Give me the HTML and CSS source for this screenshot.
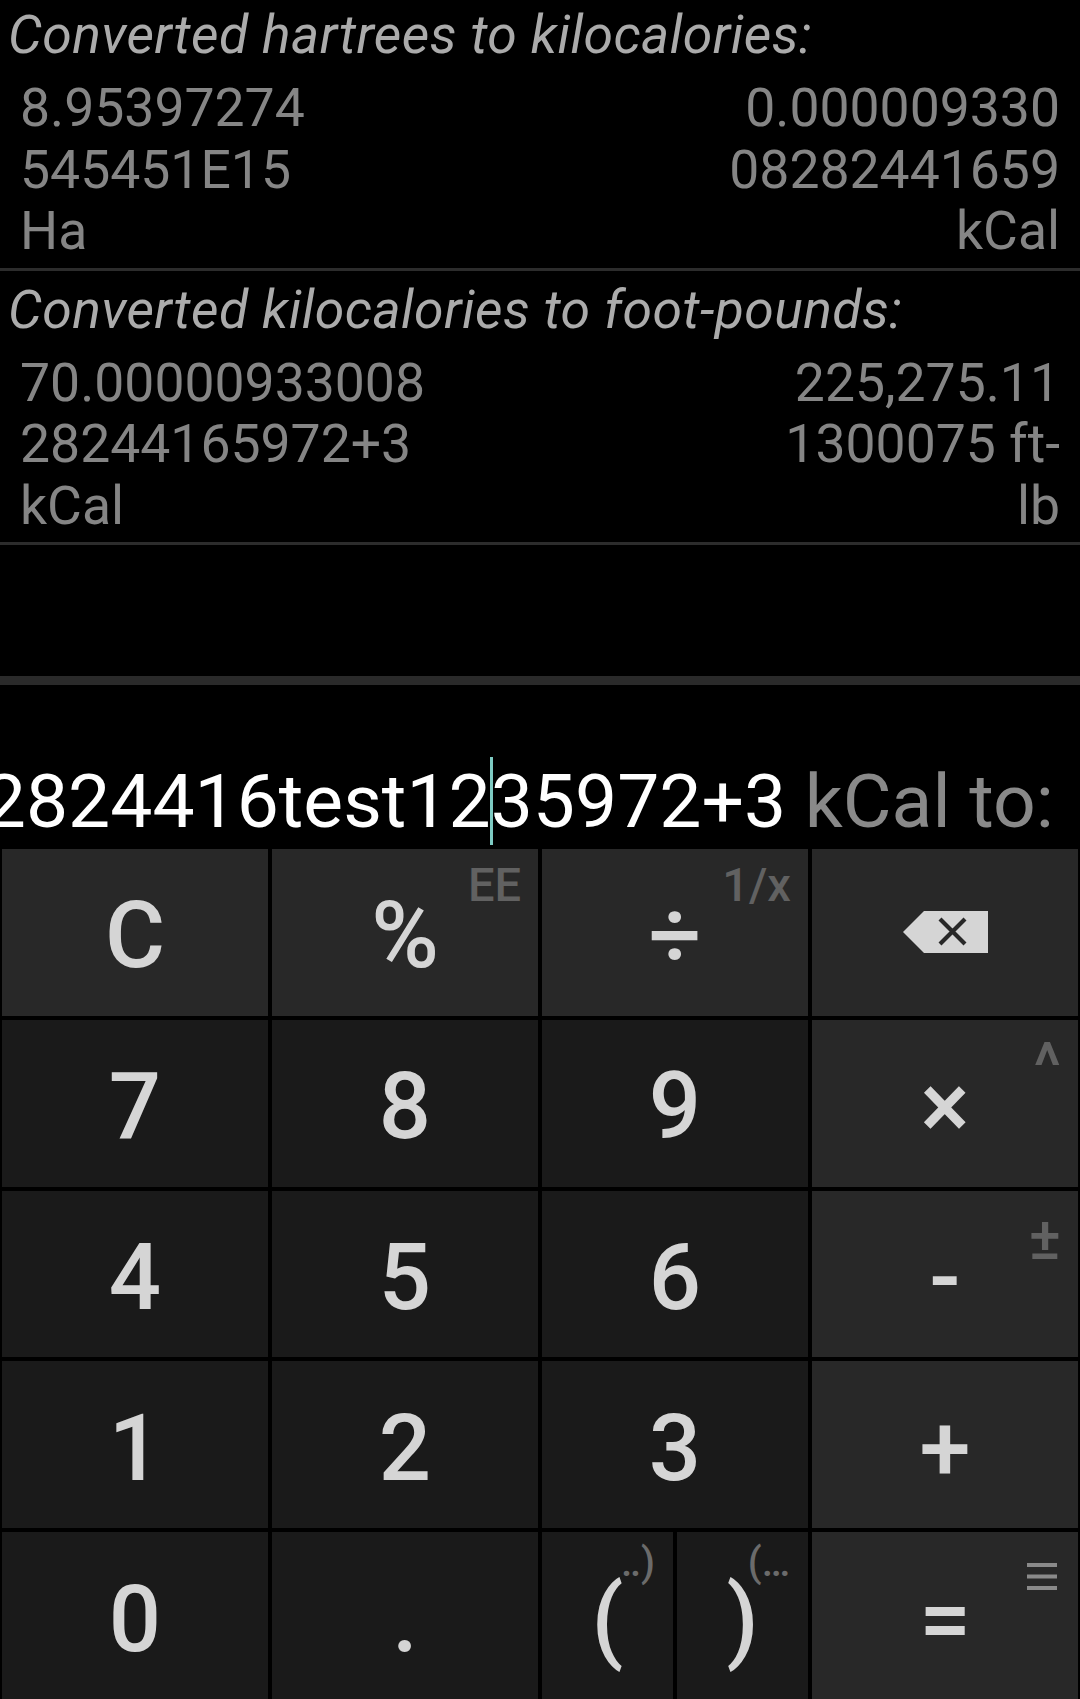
FILE: index.html
```html
<!DOCTYPE html>
<html lang="en">
<head>
<meta charset="utf-8">
<title>Unit calculator</title>
<link rel="stylesheet" href="styles.css">
</head>
<body>
<div class="app">
  <section class="results">
    <div class="result">
      <div class="result-title">Converted hartrees to kilocalories:</div>
      <div class="result-values">
        <div class="value from"><div>8.95397274</div><div>545451E15</div><div>Ha</div></div>
        <div class="value to"><div>0.000009330</div><div>08282441659</div><div>kCal</div></div>
      </div>
    </div>
    <div class="result">
      <div class="result-title">Converted kilocalories to foot-pounds:</div>
      <div class="result-values">
        <div class="value from"><div>70.00000933008</div><div>28244165972+3</div><div>kCal</div></div>
        <div class="value to"><div>225,275.11</div><div>1300075 ft-</div><div>lb</div></div>
      </div>
    </div>
  </section>
  <div class="handle"></div>
  <div class="display">
    <div class="input-line"><span class="input-text"><span class="input">2824416test12<span class="caret"></span>35972+3</span> <span class="hint">kCal to:</span></span></div>
  </div>
  <div class="keypad">
    <div class="key fn">C</div>
    <div class="key fn">%<span class="alt">EE</span></div>
    <div class="key fn">÷<span class="alt">1/x</span></div>
    <div class="key fn">
      <svg class="backspace" width="85" height="42" viewBox="0 0 85 42" aria-label="backspace">
        <polygon points="0,21 21,0 85,0 85,42 21,42" fill="#d5d5d5"/>
        <path d="M37 8 L62 33 M62 8 L37 33" stroke="#282828" stroke-width="4.2" fill="none"/>
      </svg>
    </div>

    <div class="key num">7</div>
    <div class="key num">8</div>
    <div class="key num">9</div>
    <div class="key fn">×<span class="alt alt-pow">^</span></div>

    <div class="key num">4</div>
    <div class="key num">5</div>
    <div class="key num">6</div>
    <div class="key fn">-<span class="alt alt-pm">±</span></div>

    <div class="key num">1</div>
    <div class="key num">2</div>
    <div class="key num">3</div>
    <div class="key fn">+</div>

    <div class="key num">0</div>
    <div class="key num">.</div>
    <div class="key-pair">
      <div class="key num"><span class="alt alt-paren">‥)</span><span class="main">(</span></div>
      <div class="key num"><span class="alt alt-paren">(…</span><span class="main">)</span></div>
    </div>
    <div class="key fn">=<span class="alt alt-menu"><svg width="30" height="27" viewBox="0 0 30 27"><rect x="0" y="0" width="30" height="4" fill="#8a8a8a"/><rect x="0" y="11.5" width="30" height="4" fill="#8a8a8a"/><rect x="0" y="23" width="30" height="4" fill="#8a8a8a"/></svg></span></div>
  </div>
</div>
</body>
</html>
```

FILE: styles.css
```css
* {
  box-sizing: border-box;
}

html, body {
  margin: 0;
  padding: 0;
  background: #000;
}

body {
  width: 1080px;
  height: 1699px;
  overflow: hidden;
  font-family: "Roboto", "Noto Sans", sans-serif;
}

.app {
  display: flex;
  flex-direction: column;
  height: 1699px;
}

/* ---------- results ---------- */
.results {
  flex: 1;
  min-height: 0;
  overflow: hidden;
}

.result {
  padding: 8px 0 6px;
  border-bottom: 3px solid #2c2c2c;
}

.result:first-child {
  padding-top: 4px;
}

.result-title {
  padding: 0 8px;
  font-style: italic;
  font-size: 53.5px;
  letter-spacing: 0.4px;
  line-height: 61.5px;
  color: #ababab;
  white-space: nowrap;
}

.result-values {
  display: flex;
  justify-content: space-between;
  margin-top: 11.5px;
  padding: 0 20px;
  font-size: 53.5px;
  line-height: 61.5px;
  color: #858585;
}

.value.to {
  text-align: right;
}

/* ---------- handle ---------- */
.handle {
  flex: 0 0 9px;
  background: #2a2a2a;
}

/* ---------- display ---------- */
.display {
  flex: 0 0 162px;
  display: flex;
  align-items: flex-end;
  padding-bottom: 2px;
}

.input-line {
  width: 100%;
  display: flex;
  justify-content: flex-end;
  padding-right: 26px;
  overflow: hidden;
  white-space: nowrap;
  font-size: 75px;
  line-height: 88px;
}

.input-text {
  flex: none;
}

.input {
  color: #ffffff;
}

.hint {
  color: #898989;
}

.caret {
  position: relative;
  display: inline-block;
  width: 0;
  height: 0;
}

.caret::before {
  content: "";
  position: absolute;
  left: -1px;
  bottom: -21px;
  width: 3px;
  height: 100px;
  background: #7ecbc3;
}

/* ---------- keypad ---------- */
.keypad {
  flex: 0 0 852px;
  display: grid;
  grid-template-columns: repeat(4, 1fr);
  grid-template-rows: repeat(5, 1fr);
  gap: 4px;
  padding: 2px 2px 0;
}

.key-pair {
  display: grid;
  grid-template-columns: 1fr 1fr;
  gap: 4px;
}

.key {
  position: relative;
  display: flex;
  align-items: center;
  justify-content: center;
  padding-top: 7px;
  font-size: 92px;
  font-weight: 500;
  line-height: normal;
  color: #d5d5d5;
}

.key.fn {
  background: #282828;
}

.key.num {
  background: #1a1a1a;
}

.key .main {
  position: relative;
}

.backspace {
  display: block;
  margin-top: -7px;
}

.alt {
  position: absolute;
  top: 12px;
  right: 17px;
  font-size: 47px;
  font-weight: 500;
  line-height: 1;
  color: #616161;
}

.alt-pow {
  top: 15px;
  right: 17px;
  font-size: 64px;
}

.alt-pm {
  top: 18px;
  right: 17px;
  font-size: 60px;
}

.alt-paren {
  top: 11px;
  right: 18px;
  font-size: 40px;
  color: #6b6b6b;
}

.alt-menu {
  top: 31px;
  right: 21px;
}

.alt-menu svg {
  display: block;
}
```
